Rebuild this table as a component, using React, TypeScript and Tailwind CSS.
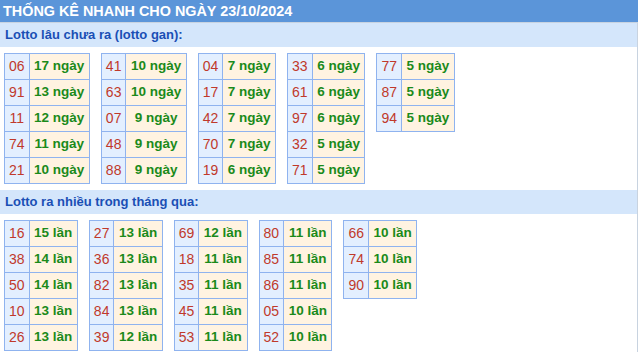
import React from 'react';

const gan: [string, string][][] = [
  [['06', '17 ngày'], ['91', '13 ngày'], ['11', '12 ngày'], ['74', '11 ngày'], ['21', '10 ngày']],
  [['41', '10 ngày'], ['63', '10 ngày'], ['07', '9 ngày'], ['48', '9 ngày'], ['88', '9 ngày']],
  [['04', '7 ngày'], ['17', '7 ngày'], ['42', '7 ngày'], ['70', '7 ngày'], ['19', '6 ngày']],
  [['33', '6 ngày'], ['61', '6 ngày'], ['97', '6 ngày'], ['32', '5 ngày'], ['71', '5 ngày']],
  [['77', '5 ngày'], ['87', '5 ngày'], ['94', '5 ngày']],
];

const nhieu: [string, string][][] = [
  [['16', '15 lần'], ['38', '14 lần'], ['50', '14 lần'], ['10', '13 lần'], ['26', '13 lần']],
  [['27', '13 lần'], ['36', '13 lần'], ['82', '13 lần'], ['84', '13 lần'], ['39', '12 lần']],
  [['69', '12 lần'], ['18', '11 lần'], ['35', '11 lần'], ['45', '11 lần'], ['53', '11 lần']],
  [['80', '11 lần'], ['85', '11 lần'], ['86', '11 lần'], ['05', '10 lần'], ['52', '10 lần']],
  [['66', '10 lần'], ['74', '10 lần'], ['90', '10 lần']],
];

function StatTable({ rows }: { rows: [string, string][] }) {
  return (
    <table className="border-collapse self-start">
      <tbody>
        {rows.map(([num, val]) => (
          <tr key={num} className="h-[26px]">
            <td className="border border-[#8fb3ef] bg-[#e3efff] px-[4px] py-0 text-center text-[14px] text-[#c0392b]">{num}</td>
            <td className="border border-[#8fb3ef] bg-[#fff3e1] px-[4.5px] py-0 text-center text-[13.5px] font-bold text-[#1a8a1a]">{val}</td>
          </tr>
        ))}
      </tbody>
    </table>
  );
}

function Section({ title, tables }: { title: string; tables: [string, string][][] }) {
  return (
    <div>
      <div className="h-[24px] bg-[#d4e6fb] pl-[5px] text-[13px] font-bold leading-[24px] text-[#1a4fb5]">{title}</div>
      <div className="flex gap-[11px] px-[4px] pt-[6px] pb-[6px]">
        {tables.map((t, i) => (
          <StatTable key={i} rows={t} />
        ))}
      </div>
    </div>
  );
}

export default function App() {
  return (
    <div className="w-[638px] bg-white font-['Liberation_Sans',Arial,sans-serif]">
      <div className="h-[22px] bg-[#5b95d9] pl-[3px] text-[14.4px] font-bold leading-[23px] text-white">
        THỐNG KÊ NHANH CHO NGÀY 23/10/2024
      </div>
      <div className="border-t border-r border-[#c8d3e0]">
        <Section title="Lotto lâu chưa ra (lotto gan):" tables={gan} />
        <Section title="Lotto ra nhiều trong tháng qua:" tables={nhieu} />
      </div>
    </div>
  );
}
